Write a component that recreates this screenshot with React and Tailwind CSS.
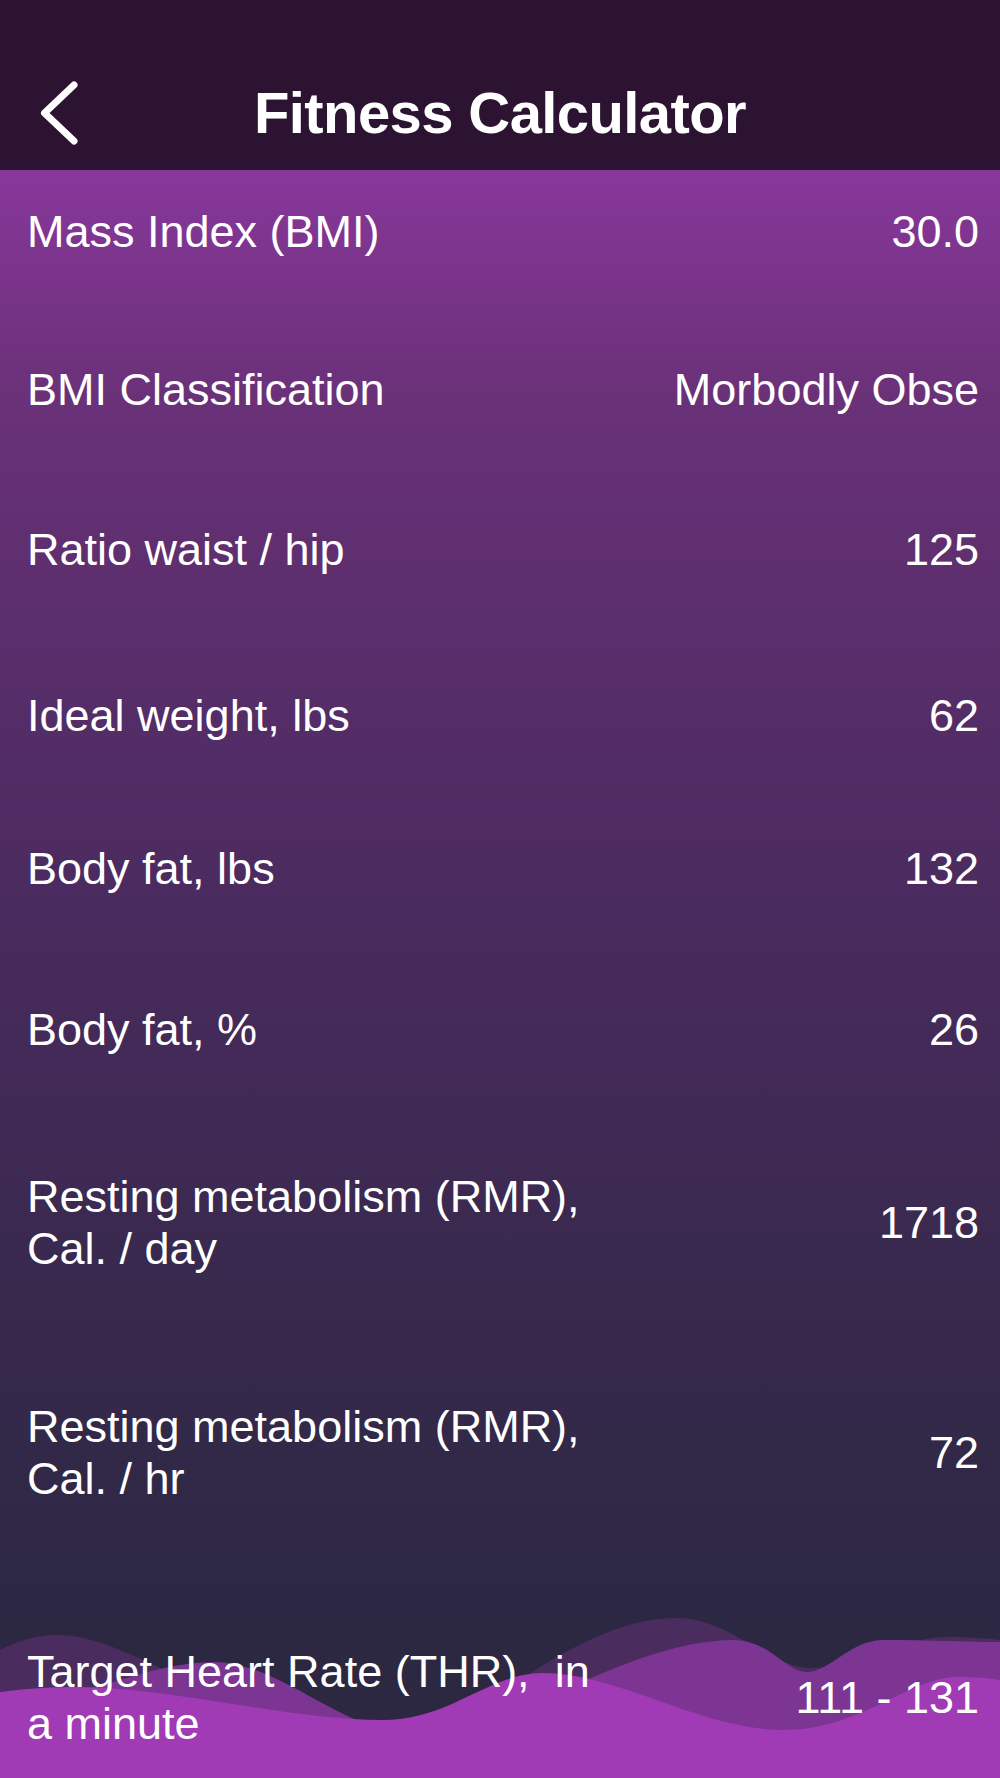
// ── Data ─────────────────────────────────────────────────────
// box: height of the centred text area, gap: space below it
const rows = [
  { label: 'Mass Index (BMI)', value: '30.0', box: 'h-[120px] mb-[38px]' },
  { label: 'BMI Classification', value: 'Morbodly Obse', box: 'h-[120px] mb-[40px]' },
  { label: 'Ratio waist / hip', value: '125', box: 'h-[120px] mb-[46px]' },
  { label: 'Ideal weight, lbs', value: '62', box: 'h-[120px] mb-[33px]' },
  { label: 'Body fat, lbs', value: '132', box: 'h-[120px] mb-[41px]' },
  { label: 'Body fat, %', value: '26', box: 'h-[120px] mb-[39px]' },
  { label: 'Resting metabolism (RMR), Cal. / day', value: '1718', box: 'h-[188px] mb-[42px]' },
  { label: 'Resting metabolism (RMR), Cal. / hr', value: '72', box: 'h-[188px] mb-[36px]' },
  { label: 'Target Heart Rate (THR),\u00a0 in a minute', value: '111 - 131', box: 'h-[230px] mb-[30px]' },
]

// ── Back chevron ─────────────────────────────────────────────
function BackChevron() {
  return (
    <svg width="44" height="70" viewBox="0 0 44 70" fill="none" className="ml-[37px]">
      <path
        d="M37 7 L7.5 35 L37 63"
        stroke="#fff"
        strokeWidth="7"
        strokeLinecap="round"
        strokeLinejoin="round"
      />
    </svg>
  )
}

// ── Waves ────────────────────────────────────────────────────
function Waves() {
  return (
    <svg
      className="absolute bottom-0 left-0 w-full h-[170px]"
      viewBox="0 0 1000 170"
      preserveAspectRatio="none"
    >
      <path
        fill="#4a2c5f"
        d="M0,42 C20,32 40,26 60,27 C100,28 150,55 200,80 C260,108 320,125 383,125 C440,125 480,100 520,72 C580,32 630,10 677,10 C730,10 770,60 810,60 C850,60 900,29 950,29 C970,29 990,31 1000,32 L1000,170 L0,170 Z"
      />
      <path
        fill="#7c3592"
        d="M0,100 C80,92 150,54 213,54 C280,54 340,122 400,122 C460,122 520,100 580,75 C640,48 690,32 733,32 C770,32 785,64 807,64 C830,64 850,32 883,32 C930,32 970,34 1000,34 L1000,170 L0,170 Z"
      />
      <path
        fill="#a03ab5"
        d="M0,84 C30,80 55,79 77,79 C170,79 290,112 383,112 C450,112 490,65 542,65 C620,65 700,122 784,122 C860,122 910,69 957,69 C975,69 990,70 1000,72 L1000,170 L0,170 Z"
      />
    </svg>
  )
}

// ── Row ──────────────────────────────────────────────────────
function ResultRow({ label, value, box }) {
  return (
    <div className={`flex items-center justify-between pl-[27px] pr-[21px] ${box}`}>
      <p className="w-[600px] text-[45px] leading-[52px] text-white">{label}</p>
      <p className="text-[45px] leading-[52px] text-white text-right whitespace-nowrap">{value}</p>
    </div>
  )
}

export default function App() {
  return (
    <div className="relative w-full h-[1778px] overflow-hidden flex flex-col bg-[#2c2842] font-['Liberation_Sans',Arial,sans-serif]">
      {/* Header */}
      <header className="h-[170px] shrink-0 bg-[#2c1332] pt-[55px]">
        <div className="h-[115px] grid grid-cols-[1fr_auto_1fr] items-center">
          <div className="flex items-center">
            <BackChevron />
          </div>
          <h1 className="text-[58px] leading-none font-bold tracking-[-0.6px] text-white">
            Fitness Calculator
          </h1>
          <div />
        </div>
      </header>

      {/* Results */}
      <main className="relative flex-1 min-h-0 overflow-hidden bg-[linear-gradient(180deg,#88379b_0%,#6a3178_14%,#552d68_33%,#452a5a_52%,#38294d_70%,#2c2843_89%,#2c2842_100%)]">
        <Waves />
        <div className="relative z-10 pt-[2px]">
          {rows.map((r) => (
            <ResultRow key={r.label} {...r} />
          ))}
        </div>
      </main>
    </div>
  )
}
